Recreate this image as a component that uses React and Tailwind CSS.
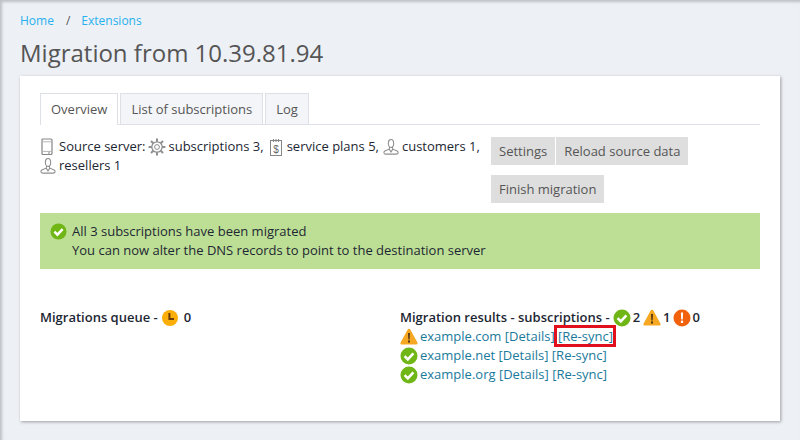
const FONT = "font-['Open_Sans',sans-serif]";

function CheckIcon({ className = 'w-[18px] h-[18px]' }) {
  return (
    <svg viewBox="0 0 18 18" className={`inline-block shrink-0 ${className}`}>
      <circle cx="9" cy="9" r="8.5" fill="#6fb616" />
      <path d="M4.6 9.2 L7.8 12.4 L13.4 6.4" fill="none" stroke="#fff" strokeWidth="2.6" />
    </svg>
  );
}

function WarnIcon() {
  return (
    <svg viewBox="0 0 18 18" className="inline-block shrink-0 w-[18px] h-[18px]">
      <path d="M9 .8 Q10 .8 10.6 2 L17.4 14.6 Q18.2 16.6 16.2 16.6 L1.8 16.6 Q-.2 16.6 .6 14.6 L7.4 2 Q8 .8 9 .8 Z" fill="#f7a823" />
      <path d="M8 5 H10 L9.7 11.4 H8.3 Z" fill="#5a3a10" />
      <rect x="8" y="12.4" width="2" height="2.2" fill="#5a3a10" />
    </svg>
  );
}

function ErrorIcon() {
  return (
    <svg viewBox="0 0 18 18" className="inline-block shrink-0 w-[18px] h-[18px]">
      <circle cx="9" cy="9" r="8.5" fill="#f2610c" />
      <path d="M7.9 3.6 H10.1 L9.8 10.4 H8.2 Z" fill="#fff" />
      <rect x="7.9" y="11.6" width="2.2" height="2.4" fill="#fff" />
    </svg>
  );
}

function ClockIcon() {
  return (
    <svg viewBox="0 0 18 18" className="inline-block shrink-0 w-[18px] h-[18px]">
      <circle cx="9" cy="9" r="8" fill="#fbae08" />
      <path d="M8.4 4 V10 H13" fill="none" stroke="#6b3c06" strokeWidth="2" />
    </svg>
  );
}

function ServerIcon() {
  return (
    <svg viewBox="0 0 14 18" className="inline-block shrink-0 w-[14px] h-[18px]" fill="none" stroke="#858585">
      <rect x="2" y="1" width="10" height="15.5" rx="1" strokeWidth="1.2" />
      <path d="M2 3.8 H12 M2 13.4 H12" stroke="#b5b5b5" />
      <path d="M8 15 H10" />
    </svg>
  );
}

function GearIcon() {
  return (
    <svg viewBox="0 0 18 18" className="inline-block shrink-0 w-[18px] h-[18px]" fill="none" stroke="#8e8e8e">
      <circle cx="9" cy="9" r="2.4" />
      <circle cx="9" cy="9" r="5.2" strokeWidth="1.3" />
      <path d="M9 .6 V3.8 M9 14.2 V17.4 M.6 9 H3.8 M14.2 9 H17.4 M3 3 L5.3 5.3 M12.7 12.7 L15 15 M15 3 L12.7 5.3 M5.3 12.7 L3 15" strokeWidth="2" />
    </svg>
  );
}

function PlanIcon() {
  return (
    <svg viewBox="0 0 14 18" className="inline-block shrink-0 w-[14px] h-[18px]" fill="none" stroke="#858585">
      <rect x="1.5" y="2.5" width="11" height="15" />
      <path d="M4.5 1 V4 M7 1 V4 M9.5 1 V4" />
      <text x="7" y="14.5" textAnchor="middle" fontSize="10" fill="#666" stroke="none" fontFamily="'Liberation Sans',sans-serif">$</text>
    </svg>
  );
}

function UserIcon() {
  return (
    <svg viewBox="0 0 18 18" className="inline-block shrink-0 w-[16px] h-[18px]" fill="none" stroke="#8e8e8e" strokeWidth="1.2">
      <ellipse cx="9" cy="5" rx="3" ry="4.4" />
      <path d="M7.4 9 L7 11.4 L2.6 13.2 Q.8 14 1 15.6 Q1.4 17 3 17 H15 Q16.8 17 17 15.6 Q17.2 14 15.4 13.2 L11 11.4 L10.6 9" />
      <path d="M7 11.4 L9 14.6 L11 11.4" />
    </svg>
  );
}

function Tab({ label, active }) {
  return (
    <div
      className={
        active
          ? 'px-[10px] h-[32px] -mb-px border border-b-0 border-[#dde1e6] bg-white leading-[31px] text-[13px] text-[#555]'
          : 'px-[10px] h-[31px] border border-b-0 border-[#dde1e6] bg-[#f4f5f8] leading-[31px] text-[13px] text-[#555]'
      }
    >
      {label}
    </div>
  );
}

function SiteRow({ icon, name, boxed }) {
  return (
    <div className="flex items-center h-[19px] gap-[2px]">
      {icon}
      <span className="whitespace-nowrap text-[#1a7a9c]">
        {name} [Details]{' '}
        <span className={boxed ? 'relative' : ''}>
          [Re-sync]
          {boxed && (
            <span className="absolute -left-[4px] -right-[3px] -top-[2px] -bottom-[2px] border-[3px] border-[#e2101c]" />
          )}
        </span>
      </span>
    </div>
  );
}

export default function App() {
  return (
    <div className={`${FONT} w-[800px] h-[440px] overflow-hidden bg-[#edf0f5] shadow-[inset_2px_2px_3px_rgba(0,0,0,0.2)] px-5 pt-[13px]`}>
      <div className="flex items-center h-[16px] text-[12px] text-[#27b0ee]">
        <span>Home</span>
        <span className="ml-[12px] mr-[11px] text-[#555]">/</span>
        <span>Extensions</span>
      </div>
      <h1 className="mt-[7px] h-[34px] text-[24px] leading-[34px] text-[#555]">Migration from 10.39.81.94</h1>
      <div className="mt-[6px] h-[345px] bg-white px-5 pt-[17px] shadow-[1px_1px_3px_rgba(0,0,0,0.35)]">
        <div className="flex gap-[2px] h-[32px] border-b border-[#dde1e6]">
          <Tab label="Overview" active />
          <Tab label="List of subscriptions" />
          <Tab label="Log" />
        </div>

        <div className="flex mt-[12px] text-[13px] leading-[19px] text-[#1d2733]">
          <div className="w-[451px] pr-2">
            <div className="flex items-center h-[19px] whitespace-nowrap">
              <ServerIcon />
              <span className="ml-[5px]">Source server:</span>
              <span className="ml-[3px] flex"><GearIcon /></span>
              <span className="ml-[2px]">subscriptions 3,</span>
              <span className="ml-[5px] flex"><PlanIcon /></span>
              <span className="ml-[4px]">service plans 5,</span>
              <span className="ml-[4px] flex"><UserIcon /></span>
              <span className="ml-[3px]">customers 1,</span>
            </div>
            <div className="flex items-center gap-[3px] h-[19px] whitespace-nowrap">
              <UserIcon />
              <span>resellers 1</span>
            </div>
          </div>
          <div className="flex flex-col gap-[10px] text-[#555]">
            <div className="flex gap-px">
              <div className="px-2 h-[28px] leading-[28px] bg-[#dedede]">Settings</div>
              <div className="px-2 h-[28px] leading-[28px] bg-[#dedede]">Reload source data</div>
            </div>
            <div className="self-start px-2 h-[28px] leading-[28px] bg-[#dedede]">Finish migration</div>
          </div>
        </div>

        <div className="flex gap-[5px] mt-[10px] h-[56px] bg-[#bddf95] pl-[10px] pt-[9px] text-[13px] leading-[19px] text-[#1d2733]">
          <CheckIcon className="w-[17px] h-[17px] mt-[1px]" />
          <div>
            <div>All 3 subscriptions have been migrated</div>
            <div>You can now alter the DNS records to point to the destination server</div>
          </div>
        </div>

        <div className="flex mt-[39px] text-[13px] leading-[19px] text-[#1d2733]">
          <div className="w-[360px] flex items-center h-[19px] font-semibold whitespace-nowrap">
            <span>Migrations queue -</span>
            <span className="ml-[3px] flex"><ClockIcon /></span>
            <span className="ml-[5px]">0</span>
          </div>
          <div>
            <div className="flex items-center h-[19px] font-semibold whitespace-nowrap">
              <span>Migration results - subscriptions -</span>
              <span className="ml-[3px] flex"><CheckIcon /></span>
              <span className="ml-[2px]">2</span>
              <span className="ml-[3px] flex"><WarnIcon /></span>
              <span className="ml-[2px]">1</span>
              <span className="ml-[2px] flex"><ErrorIcon /></span>
              <span className="ml-[2px]">0</span>
            </div>
            <SiteRow icon={<WarnIcon />} name="example.com" boxed />
            <SiteRow icon={<CheckIcon />} name="example.net" />
            <SiteRow icon={<CheckIcon />} name="example.org" />
          </div>
        </div>
      </div>
    </div>
  );
}
